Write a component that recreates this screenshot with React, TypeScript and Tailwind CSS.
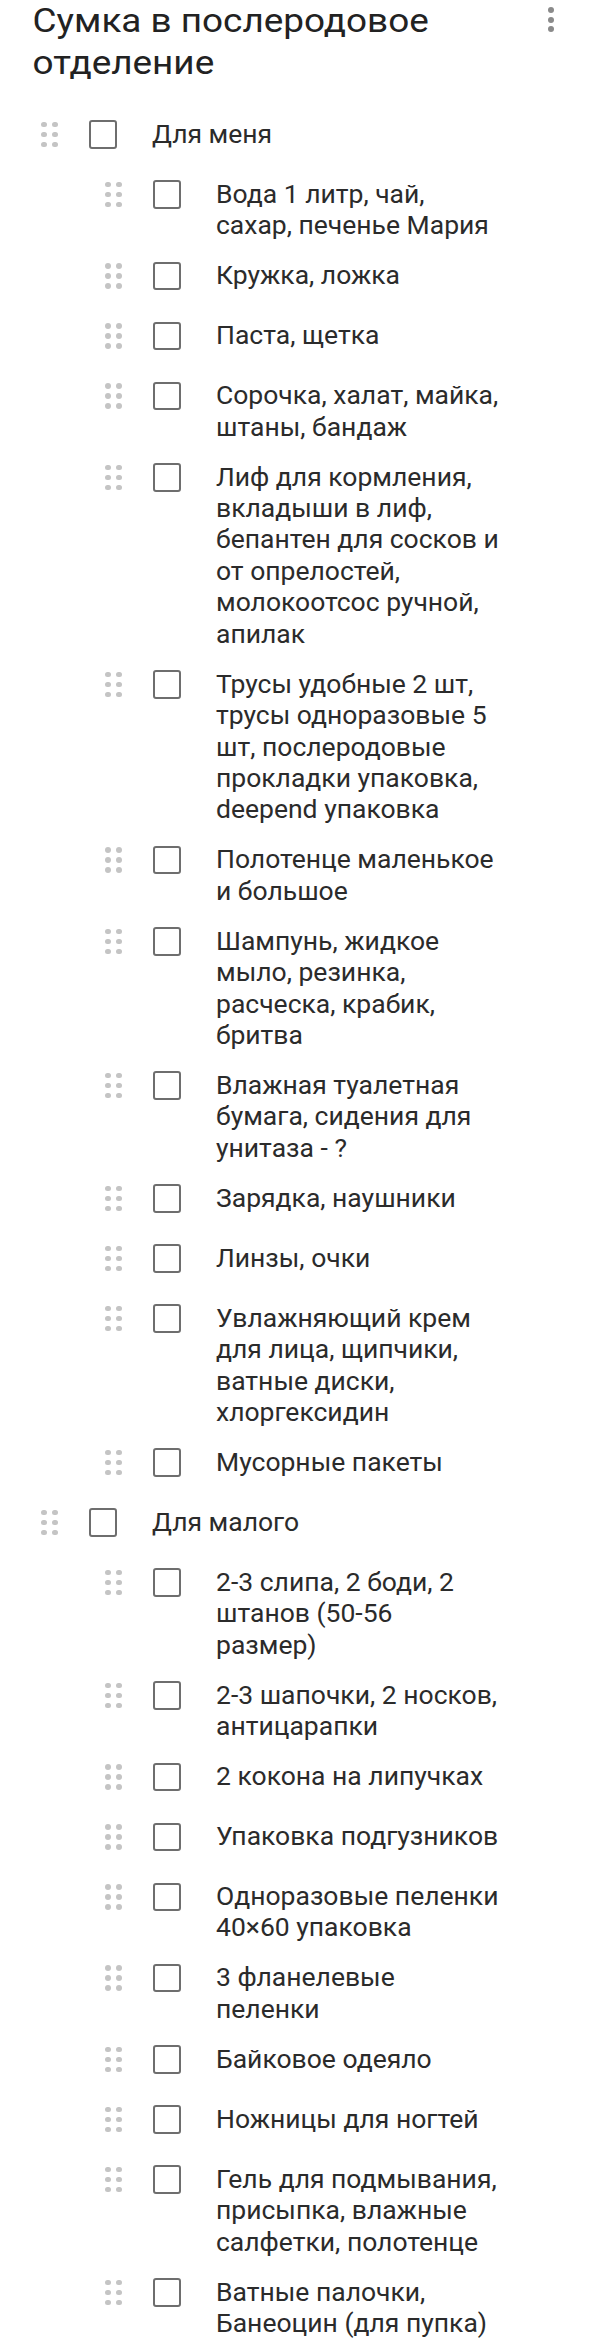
import clsx from "clsx";

type Item = { level: 0 | 1; lines: string[] };

const items: Item[] = [
  { level: 0, lines: ["Для меня"] },
  { level: 1, lines: ["Вода 1 литр, чай,", "сахар, печенье Мария"] },
  { level: 1, lines: ["Кружка, ложка"] },
  { level: 1, lines: ["Паста, щетка"] },
  { level: 1, lines: ["Сорочка, халат, майка,", "штаны, бандаж"] },
  {
    level: 1,
    lines: [
      "Лиф для кормления,",
      "вкладыши в лиф,",
      "бепантен для сосков и",
      "от опрелостей,",
      "молокоотсос ручной,",
      "апилак",
    ],
  },
  {
    level: 1,
    lines: [
      "Трусы удобные 2 шт,",
      "трусы одноразовые 5",
      "шт, послеродовые",
      "прокладки упаковка,",
      "deepend упаковка",
    ],
  },
  { level: 1, lines: ["Полотенце маленькое", "и большое"] },
  { level: 1, lines: ["Шампунь, жидкое", "мыло, резинка,", "расческа, крабик,", "бритва"] },
  { level: 1, lines: ["Влажная туалетная", "бумага, сидения для", "унитаза - ?"] },
  { level: 1, lines: ["Зарядка, наушники"] },
  { level: 1, lines: ["Линзы, очки"] },
  {
    level: 1,
    lines: ["Увлажняющий крем", "для лица, щипчики,", "ватные диски,", "хлоргексидин"],
  },
  { level: 1, lines: ["Мусорные пакеты"] },
  { level: 0, lines: ["Для малого"] },
  { level: 1, lines: ["2-3 слипа, 2 боди, 2", "штанов (50-56", "размер)"] },
  { level: 1, lines: ["2-3 шапочки, 2 носков,", "антицарапки"] },
  { level: 1, lines: ["2 кокона на липучках"] },
  { level: 1, lines: ["Упаковка подгузников"] },
  { level: 1, lines: ["Одноразовые пеленки", "40×60 упаковка"] },
  { level: 1, lines: ["3 фланелевые", "пеленки"] },
  { level: 1, lines: ["Байковое одеяло"] },
  { level: 1, lines: ["Ножницы для ногтей"] },
  { level: 1, lines: ["Гель для подмывания,", "присыпка, влажные", "салфетки, полотенце"] },
  { level: 1, lines: ["Ватные палочки,", "Банеоцин (для пупка)"] },
];

// drag handle: 2 x 3 grid of dots
const Handle = () => (
  <div className="grid grid-cols-2 gap-x-[5.5px] gap-y-[4.5px]">
    {[0, 1, 2, 3, 4, 5].map((i) => (
      <span key={i} className="block size-[5.5px] rounded-full bg-[#c4c4c4]" />
    ))}
  </div>
);

const Row = ({ item }: { item: Item }) => (
  <div
    className={clsx(
      "flex min-h-[60px] items-start pt-[8.4px] pb-[10.2px]",
      item.level === 0 ? "pl-[41px]" : "pl-[105px]"
    )}
  >
    <div className="mt-[1px] flex h-[31.4px] shrink-0 items-center">
      <Handle />
      <div className="ml-[31px] size-[28.5px] rounded-[3px] border-[2.6px] border-[#6e6e6e]" />
    </div>
    <div className="ml-[35px] text-[26.5px] leading-[31.4px] text-[#2b2b2b]">
      {item.lines.map((line, i) => (
        <div key={i} className="whitespace-nowrap">
          {line}
        </div>
      ))}
    </div>
  </div>
);

export default function App() {
  return (
    <div className="min-h-screen overflow-hidden bg-white font-['Roboto',sans-serif]">
      <header className="flex items-start justify-between">
        <h1 className="origin-left scale-x-[1.085] pl-[30px] text-[34px] font-normal text-[#222]">
          <span className="block leading-[40px]">Сумка в послеродовое</span>
          <span className="block leading-[45px]">отделение</span>
        </h1>
        <div className="flex flex-col gap-[3.5px] pr-[46px] pt-[7px]">
          <span className="block size-[6px] rounded-full bg-[#8a8a8a]" />
          <span className="block size-[6px] rounded-full bg-[#8a8a8a]" />
          <span className="block size-[6px] rounded-full bg-[#8a8a8a]" />
        </div>
      </header>

      <div className="mt-[24.5px]">
        {items.map((item, i) => (
          <Row key={i} item={item} />
        ))}
      </div>
    </div>
  );
}
